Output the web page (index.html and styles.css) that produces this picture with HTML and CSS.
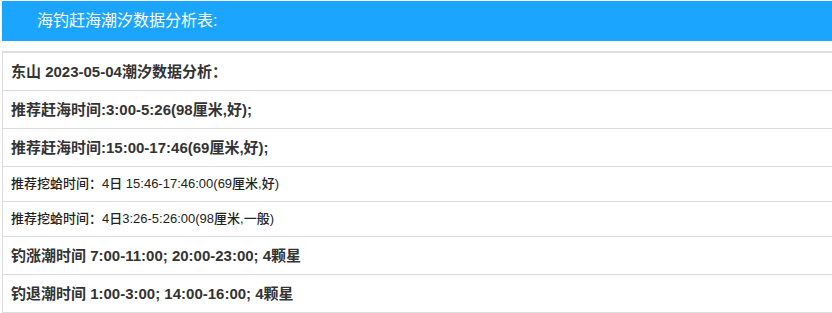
FILE: index.html
```html
<!DOCTYPE html>
<html lang="zh-CN">
<head>
<meta charset="utf-8">
<title>海钓赶海潮汐数据分析表</title>
<link rel="stylesheet" href="styles.css">
</head>
<body>
<div class="page">
  <div class="title">海钓赶海潮汐数据分析表:</div>
  <div class="table">
    <div class="row bold">东山 2023-05-04潮汐数据分析：</div>
    <div class="row bold">推荐赶海时间:3:00-5:26(98厘米,好);</div>
    <div class="row bold">推荐赶海时间:15:00-17:46(69厘米,好);</div>
    <div class="row small">推荐挖蛤时间：4日 15:46-17:46:00(69厘米,好)</div>
    <div class="row small">推荐挖蛤时间：4日3:26-5:26:00(98厘米,一般)</div>
    <div class="row bold">钓涨潮时间 7:00-11:00; 20:00-23:00; 4颗星</div>
    <div class="row bold">钓退潮时间 1:00-3:00; 14:00-16:00; 4颗星</div>
  </div>
</div>
</body>
</html>
```
FILE: styles.css
```css
html, body {
  margin: 0;
  padding: 0;
  overflow: hidden;
  background: #fff;
}
body {
  padding: 1px 0 0 2px;
  font-family: "Liberation Sans", "Noto Sans CJK SC", sans-serif;
  color: #333;
}
.page {
  width: 900px;
}
.title {
  height: 40px;
  line-height: 40px;
  background: #1ba5ff;
  color: #fff;
  font-size: 16px;
  padding-left: 35px;
}
.table {
  margin-top: 10px;
  border: 1px solid #ddd;
  border-top-width: 2px;
}
.row {
  padding-left: 8px;
  border-bottom: 1px solid #ddd;
  white-space: nowrap;
}
.row.bold {
  font-size: 15px;
  font-weight: bold;
  line-height: 37px;
}
.row.small {
  font-size: 13px;
  font-weight: 500;
  color: #222;
  line-height: 34px;
}
```
